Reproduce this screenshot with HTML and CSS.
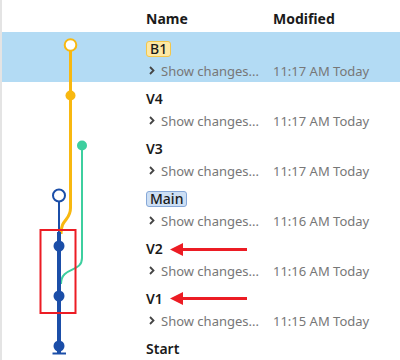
FILE: index.html
```html
<!DOCTYPE html>
<html>
<head>
<meta charset="utf-8">
<link rel="stylesheet" href="styles.css">
</head>
<body>
<div class="panel">
  <div class="header">
    <div></div>
    <div class="col-title">Name</div>
    <div class="col-title">Modified</div>
  </div>
  <div class="row selected">
    <div></div>
    <div class="cell"><div class="name"><span class="badge badge-branch">B1</span></div><div class="sub"><svg class="chev" width="6" height="9" viewBox="0 0 6 9"><polyline points="1,1 4.5,4.5 1,8" /></svg>Show changes...</div></div>
    <div class="cell"><div class="name"></div><div class="sub">11:17 AM Today</div></div>
  </div>
  <div class="row">
    <div></div>
    <div class="cell"><div class="name">V4</div><div class="sub"><svg class="chev" width="6" height="9" viewBox="0 0 6 9"><polyline points="1,1 4.5,4.5 1,8" /></svg>Show changes...</div></div>
    <div class="cell"><div class="name"></div><div class="sub">11:17 AM Today</div></div>
  </div>
  <div class="row">
    <div></div>
    <div class="cell"><div class="name">V3</div><div class="sub"><svg class="chev" width="6" height="9" viewBox="0 0 6 9"><polyline points="1,1 4.5,4.5 1,8" /></svg>Show changes...</div></div>
    <div class="cell"><div class="name"></div><div class="sub">11:17 AM Today</div></div>
  </div>
  <div class="row">
    <div></div>
    <div class="cell"><div class="name"><span class="badge badge-main">Main</span></div><div class="sub"><svg class="chev" width="6" height="9" viewBox="0 0 6 9"><polyline points="1,1 4.5,4.5 1,8" /></svg>Show changes...</div></div>
    <div class="cell"><div class="name"></div><div class="sub">11:16 AM Today</div></div>
  </div>
  <div class="row">
    <div></div>
    <div class="cell"><div class="name">V2</div><div class="sub"><svg class="chev" width="6" height="9" viewBox="0 0 6 9"><polyline points="1,1 4.5,4.5 1,8" /></svg>Show changes...</div></div>
    <div class="cell"><div class="name"></div><div class="sub">11:16 AM Today</div></div>
  </div>
  <div class="row">
    <div></div>
    <div class="cell"><div class="name">V1</div><div class="sub"><svg class="chev" width="6" height="9" viewBox="0 0 6 9"><polyline points="1,1 4.5,4.5 1,8" /></svg>Show changes...</div></div>
    <div class="cell"><div class="name"></div><div class="sub">11:15 AM Today</div></div>
  </div>
  <div class="row">
    <div></div>
    <div class="cell"><div class="name">Start</div></div>
    <div class="cell"></div>
  </div>

  <svg class="graph" width="400" height="360" viewBox="0 0 400 360">
    <path d="M59 201 V234" stroke="#1b4ea8" stroke-width="2" fill="none"/>
    <path d="M70.5 51 V208 C70.5 221 61 218 61 234" stroke="#f8b810" stroke-width="3" fill="none"/>
    <path d="M82 146 V258 C82 273 61 266 61 284" stroke="#3dcf9f" stroke-width="2" fill="none"/>
    <path d="M59 232 V353" stroke="#1b4ea8" stroke-width="4" fill="none"/>
    <path d="M52.5 353.5 H66" stroke="#1b4ea8" stroke-width="2" fill="none"/>
    <circle cx="70.5" cy="45" r="5.8" fill="#fff" stroke="#f8b810" stroke-width="2"/>
    <circle cx="70.5" cy="95.5" r="5" fill="#f8b810"/>
    <circle cx="82" cy="145.5" r="5" fill="#3dcf9f"/>
    <circle cx="59" cy="195.5" r="6" fill="#fff" stroke="#1b4ea8" stroke-width="2"/>
    <circle cx="59" cy="246" r="5.5" fill="#1b4ea8"/>
    <circle cx="59" cy="296" r="5.5" fill="#1b4ea8"/>
    <circle cx="59" cy="346" r="5.5" fill="#1b4ea8"/>
    <rect x="40.5" y="230" width="35" height="83" fill="none" stroke="#ec1c24" stroke-width="2"/>
    <path d="M181 249.5 H247" stroke="#ec1c24" stroke-width="3"/>
    <polygon points="170,249.5 183,243 183,256" fill="#ec1c24"/>
    <path d="M181 298.5 H247" stroke="#ec1c24" stroke-width="3"/>
    <polygon points="170,298.5 183,292 183,305" fill="#ec1c24"/>
  </svg>
</div>
</body>
</html>
```

FILE: styles.css
```css
* { box-sizing: border-box; }
html, body { margin: 0; padding: 0; background: #fff; }
.panel {
  position: relative;
  width: 400px;
  height: 360px;
  overflow: hidden;
  border-left: 2px solid #e4e4e4;
  font-family: "Noto Sans", "Liberation Sans", Arial, sans-serif;
  color: #1c1c1c;
}
.header {
  display: grid;
  grid-template-columns: 144px 127px 1fr;
  height: 32px;
  padding-top: 10px;
}
.col-title {
  font-size: 14px;
  font-weight: bold;
  line-height: 17px;
  color: #1a1a1a;
}
.row {
  display: grid;
  grid-template-columns: 144px 127px 1fr;
  height: 50px;
  padding-top: 8px;
}
.row.selected { background: #b3dbf4; }
.cell { display: flex; flex-direction: column; gap: 5px; }
.name {
  height: 17px;
  display: flex;
  align-items: center;
  font-size: 14px;
  font-weight: 600;
  color: #1a1a1a;
}
.sub {
  height: 17px;
  display: flex;
  align-items: center;
  font-size: 13px;
  color: #777;
  white-space: nowrap;
}
.chev {
  margin-left: 3px;
  margin-right: 6px;
}
.chev polyline {
  fill: none;
  stroke: #444;
  stroke-width: 1.8;
}
.badge {
  display: inline-block;
  height: 16px;
  line-height: 14px;
  padding: 0 3px;
  border-radius: 3px;
  border: 1px solid;
  font-weight: 500;
  font-size: 14px;
  color: #1a1a1a;
}
.badge-branch { background: #fde8a4; border-color: #f3c64a; }
.badge-main { background: #cddff4; border-color: #86a8d8; }
.graph {
  position: absolute;
  top: 0;
  left: -2px;
  pointer-events: none;
}
```
